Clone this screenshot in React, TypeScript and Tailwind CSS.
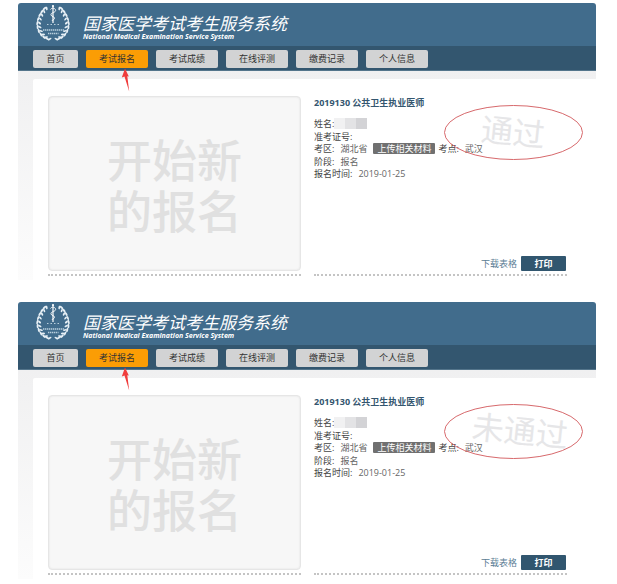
const NAV = ["首页", "考试报名", "考试成绩", "在线评测", "缴费记录", "个人信息"];
const ACTIVE = "考试报名";

const RECORDS = [
  { id: "first", result: "通过", stampPos: "left-[37px]" },
  { id: "second", result: "未通过", stampPos: "left-[28px]" },
];

// leaf centre and direction, for the left branch; the right one is mirrored
const LEAVES = [
  [9.5, 5.5, -60],
  [7, 8.5, -70],
  [4.8, 12, -80],
  [3.2, 16, -90],
  [2.4, 20, -95],
  [2.6, 24, -110],
  [3.8, 28, -125],
  [6, 31.5, -140],
  [9, 34.2, -155],
  [12.6, 36, -170],
];

function Branch() {
  return (
    <g>
      {LEAVES.map(([x, y, r]) => (
        <g key={y} fill="#e6eff5">
          <ellipse cx={x} cy={y} rx="2.2" ry="1" transform={`rotate(${r + 20} ${x} ${y})`} />
          <ellipse cx={x + 2.2} cy={y} rx="1.9" ry="0.9" transform={`rotate(${r - 40} ${x + 2.2} ${y})`} />
        </g>
      ))}
    </g>
  );
}

function Logo() {
  return (
    <svg viewBox="0 0 36 39" className="h-[39px] w-9 shrink-0" aria-hidden="true">
      <Branch />
      <g transform="translate(36 0) scale(-1 1)">
        <Branch />
      </g>
      <path d="M18 3V20" stroke="#fff" strokeWidth="1.2" />
      <circle cx="18" cy="3" r="1.1" fill="#fff" />
      <path d="M15.500 6.500C17 4 21.500 5.500 20.500 8C19.500 10 15.500 9.500 16 12C16.500 14 20 13.500 19.500 15.500C19 17 17 17 17 18" fill="none" stroke="#fff" strokeWidth="0.9" />
      <path d="M12 21.500H25" stroke="#b9cfdd" strokeWidth="1" strokeDasharray="1.5 2" />
      <path d="M8 27H29" stroke="#b9cfdd" strokeWidth="1.6" strokeDasharray="1.4 0.6" />
      <path d="M13 30.500H23.500" stroke="#b9cfdd" strokeWidth="1.3" strokeDasharray="1.400 0.6" />
    </svg>
  );
}

function Arrow() {
  return (
    <svg viewBox="0 0 10 24" className="pointer-events-none absolute top-[18px] left-[35px] z-10 h-6 w-[10px]" aria-hidden="true">
      <path d="M4 0.500L0.800 9.500L3.500 8.500L8.200 23.500L6.300 8.300L7.800 8.600Z" fill="#f03c3c" />
    </svg>
  );
}

function Header() {
  return (
    <header>
      <div className="flex h-[43px] items-start rounded-t-[3px] bg-[#416c8c] pl-[17px]">
        <Logo />
        <div className="pt-[11px] pl-3 text-white italic">
          <h1 className="text-[17px] leading-[19px] whitespace-nowrap">国家医学考试考生服务系统</h1>
          <p className="text-[7px] leading-[8px] font-bold whitespace-nowrap">National Medical Examination Service System</p>
        </div>
      </div>
      <nav className="flex h-[25px] gap-2 border-b border-[#54758b] bg-[#33566f] pt-1 pl-[15px]">
        {NAV.map((label) => (
          <div key={label} className="relative">
            <button
              type="button"
              className={
                "block h-[18px] rounded-[2px] text-[9px] leading-[18px] text-[#333] " +
                (label === "首页" ? "w-[45px] " : "w-[62px] ") +
                (label === ACTIVE ? "bg-[#fb9d05]" : "bg-[#d2d3d4]")
              }
            >
              {label}
            </button>
            {label === ACTIVE && <Arrow />}
          </div>
        ))}
      </nav>
    </header>
  );
}

function Stamp({ text, pos }: { text: string; pos: string }) {
  return (
    <div className="pointer-events-none absolute top-[9px] right-[-16px] h-[55px] w-[139px]">
      <div className={`absolute top-[10px] rotate-6 text-[32px] leading-[34px] whitespace-nowrap text-[#e6e6e8] ${pos}`}>
        {text}
      </div>
      <svg viewBox="0 0 139 55" className="absolute inset-0 h-full w-full" aria-hidden="true">
        <ellipse cx="69.5" cy="27.5" rx="69" ry="27" fill="none" stroke="#d7696c" strokeWidth="1" />
      </svg>
    </div>
  );
}

function Mosaic() {
  return (
    <span className="flex h-[11px] w-[33px]">
      <span className="flex-1 bg-[#f1f1f2]" />
      <span className="flex-1 bg-[#e3e3e5]" />
      <span className="flex-1 bg-[#d3d3d6]" />
    </span>
  );
}

function Details({ result, stampPos }: { result: string; stampPos: string }) {
  return (
    <section className="relative flex flex-col border-b-2 border-dotted border-[#c4c4c4] text-[9px] leading-[13px] text-[#666]">
      <h2 className="font-bold whitespace-nowrap text-[#34566f]">2019130 公共卫生执业医师</h2>
      <dl className="mt-2 whitespace-nowrap [&_dt]:text-[#444]">
        <div className="flex h-[13px] items-center">
          <dt>姓名:</dt>
          <dd><Mosaic /></dd>
        </div>
        <div className="flex h-3">
          <dt>准考证号:</dt>
        </div>
        <div className="flex h-[13px] items-center">
          <dt>考区:</dt>
          <dd className="ml-[6px]">湖北省</dd>
          <dd className="ml-[6px] flex">
            <button type="button" className="h-[11px] w-[62px] rounded-[1px] bg-[#707070] text-[9px] leading-[11px] text-white">
              上传相关材料
            </button>
          </dd>
          <dt className="ml-[3px]">考点:</dt>
          <dd className="ml-[6px]">武汉</dd>
        </div>
        <div className="flex h-3">
          <dt>阶段:</dt>
          <dd className="ml-[6px]">报名</dd>
        </div>
        <div className="flex">
          <dt>报名时间:</dt>
          <dd className="ml-[6px]">2019-01-25</dd>
        </div>
      </dl>
      <Stamp text={result} pos={stampPos} />
      <div className="mt-auto mb-[3px] flex items-center justify-end gap-1 pr-px">
        <a href="#form" className="text-[#5b7d94]">下载表格</a>
        <button type="button" className="h-[15px] w-[45px] rounded-[1px] bg-[#31566f] leading-[15px] font-bold text-white">
          打印
        </button>
      </div>
    </section>
  );
}

export default function App() {
  return (
    <main className="flex flex-col gap-[22px] bg-white pt-[3px] pr-[21px] pl-[18px] font-['Open_Sans','Noto_Sans_CJK_SC',sans-serif]" lang="zh-CN">
      {RECORDS.map((record) => (
        <article key={record.id}>
          <Header />
          <div className="bg-linear-to-b from-[#f0f0f1] to-[#fcfcfc] pt-2 pl-[15px]">
            <div className="grid grid-cols-2 gap-[13px] rounded-tl-[2px] bg-white pt-[17px] pr-[29px] pb-1 pl-[15px]">
              <div className="border-b-2 border-dotted border-[#c4c4c4] pb-[3px]">
                <button
                  type="button"
                  className="block h-[175px] w-full rounded-[4px] border border-[#e6e6e6] bg-[#f7f7f7] pt-1 text-[45px] leading-[51px] font-medium text-[#e0e0e0] shadow-[inset_0_0_2px_#dddddd]"
                >
                  开始新
                  <br />
                  的报名
                </button>
              </div>
              <Details result={record.result} stampPos={record.stampPos} />
            </div>
          </div>
        </article>
      ))}
    </main>
  );
}
